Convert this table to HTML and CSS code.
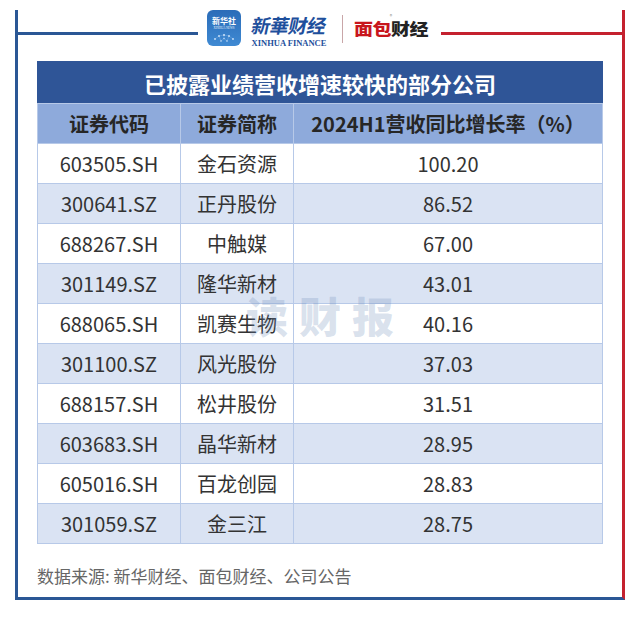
FILE: index.html
```html
<!DOCTYPE html>
<html lang="zh-CN">
<head>
<meta charset="utf-8">
<link rel="stylesheet" href="styles.css">
</head>
<body>
<div class="page">
  <div class="frame">
    <div class="topbar">
      <div class="line line-blue"></div>
      <div class="brand">
        <svg class="app-icon" width="34" height="36" viewBox="0 0 34 36">
          <defs>
            <linearGradient id="g" x1="0" y1="0" x2="0" y2="1">
              <stop offset="0" stop-color="#2b6cb8"/>
              <stop offset="1" stop-color="#3f8ad3"/>
            </linearGradient>
          </defs>
          <rect x="0" y="0" width="34" height="36" rx="6" fill="url(#g)"/>
          <text x="17" y="14" class="icon-cn">新华社</text>
          <text x="17" y="19" class="icon-en">XINHUA NEWS</text>
          <g fill="#cfe4fa">
            <circle cx="8" cy="29" r="0.9"/><circle cx="12" cy="26" r="0.9"/><circle cx="17" cy="25" r="1"/>
            <circle cx="22" cy="26" r="0.9"/><circle cx="26" cy="29" r="0.9"/><circle cx="14" cy="31" r="0.8"/>
            <circle cx="20" cy="31" r="0.8"/><circle cx="17" cy="28.5" r="0.7"/>
          </g>
          <g stroke="#cfe4fa" stroke-width="0.3" fill="none" opacity="0.7">
            <path d="M8 29 L12 26 L17 25 L22 26 L26 29 M12 26 L14 31 L17 28.5 L20 31 L22 26 M17 25 L17 28.5"/>
          </g>
        </svg>
        <div class="xinhua">
          <div class="xinhua-cn">新華财经</div>
          <div class="xinhua-en">XINHUA FINANCE</div>
        </div>
        <div class="divider"></div>
        <div class="mianbao-wrap">
          <span class="reg">®</span>
          <div class="mianbao"><span class="mb-red">面包</span><span class="mb-black">财经</span></div>
        </div>
      </div>
      <div class="line line-red"></div>
    </div>

    <div class="table-wrap">
      <table class="data">
        <colgroup>
          <col class="c1"><col class="c2"><col class="c3">
        </colgroup>
        <thead>
          <tr class="title-row"><th colspan="3">已披露业绩营收增速较快的部分公司</th></tr>
          <tr class="head-row"><th>证券代码</th><th>证券简称</th><th>2024H1营收同比增长率（%）</th></tr>
        </thead>
        <tbody>
          <tr><td>603505.SH</td><td>金石资源</td><td>100.20</td></tr>
          <tr class="alt"><td>300641.SZ</td><td>正丹股份</td><td>86.52</td></tr>
          <tr><td>688267.SH</td><td>中触媒</td><td>67.00</td></tr>
          <tr class="alt"><td>301149.SZ</td><td>隆华新材</td><td>43.01</td></tr>
          <tr><td>688065.SH</td><td>凯赛生物</td><td>40.16</td></tr>
          <tr class="alt"><td>301100.SZ</td><td>风光股份</td><td>37.03</td></tr>
          <tr><td>688157.SH</td><td>松井股份</td><td>31.51</td></tr>
          <tr class="alt"><td>603683.SH</td><td>晶华新材</td><td>28.95</td></tr>
          <tr><td>605016.SH</td><td>百龙创园</td><td>28.83</td></tr>
          <tr class="alt"><td>301059.SZ</td><td>金三江</td><td>28.75</td></tr>
        </tbody>
      </table>
      <div class="watermark">读财报</div>
    </div>

    <p class="source">数据来源: 新华财经、面包财经、公司公告</p>
  </div>
</div>
</body>
</html>
```

FILE: styles.css
```css
html, body {
  margin: 0;
  padding: 0;
  background: #ffffff;
}
body {
  font-family: "Noto Sans CJK SC", "Noto Sans", sans-serif;
  color: #333;
}
.page {
  width: 640px;
  padding: 32px 15px 0 15px;
  box-sizing: border-box;
}
.frame {
  width: 610px;
  box-sizing: border-box;
  border-left: 3px solid #2a5795;
  border-right: 3px solid #c4212f;
  border-bottom: 3px solid #2a5795;
  padding-bottom: 9px;
}
.topbar {
  display: flex;
  align-items: flex-start;
  height: 38px;
  margin-top: -22px;
}
.line {
  height: 3px;
  margin-top: 22px;
}
.line-blue {
  width: 180px;
  background: #2a5795;
}
.line-red {
  flex: 1;
  background: #c4212f;
}
.brand {
  display: flex;
  align-items: flex-start;
  margin: 0 13px 0 9px;
}
.app-icon {
  display: block;
}
.icon-cn {
  font-family: "Noto Sans CJK SC", sans-serif;
  font-size: 8px;
  font-weight: 700;
  fill: #ffffff;
  text-anchor: middle;
}
.icon-en {
  font-family: "Liberation Serif", serif;
  font-size: 3px;
  fill: #e6f0fb;
  text-anchor: middle;
}
.xinhua {
  margin-left: 8px;
  width: 80px;
  display: flex;
  flex-direction: column;
  align-items: center;
}
.xinhua-cn {
  font-family: "Noto Sans CJK SC", sans-serif;
  font-size: 19px;
  font-weight: 700;
  color: #1e4f9c;
  line-height: 24px;
  margin-top: 3px;
  letter-spacing: -0.5px;
  transform: skewX(-12deg);
}
.xinhua-en {
  font-family: "Liberation Serif", serif;
  font-size: 8.5px;
  font-weight: 700;
  color: #1e4f9c;
  line-height: 10px;
  margin-top: 1px;
}
.divider {
  width: 1px;
  height: 28px;
  margin: 5px 11px 0 13px;
  background: #c9a6a8;
}
.mianbao-wrap {
  display: flex;
  flex-direction: column;
  align-items: flex-end;
}
.reg {
  font-size: 5px;
  line-height: 6px;
  color: #888;
  margin: 3px 36px 0 0;
}
.mianbao {
  font-family: "Noto Sans CJK SC", sans-serif;
  font-size: 19px;
  font-weight: 900;
  line-height: 18px;
  letter-spacing: -0.5px;
  transform: scaleY(0.85);
}
.mb-red { color: #c8161d; }
.mb-black { color: #222; }
.table-wrap {
  position: relative;
  margin: 13px 0 0 19px;
  width: 565px;
}
.data {
  width: 565px;
  border-collapse: collapse;
  table-layout: fixed;
}
.c1 { width: 143px; }
.c2 { width: 113px; }
.c3 { width: 309px; }
.data th, .data td {
  border: 1px solid #b7c9e8;
  text-align: center;
  padding: 0;
}
.title-row th {
  height: 41px;
  background: #2f5597;
  color: #ffffff;
  font-size: 22px;
  font-weight: 700;
  border-color: #2f5597;
  border-bottom-color: #b7c9e8;
}
.head-row th {
  height: 39px;
  background: #8eaadb;
  color: #262626;
  font-size: 20px;
  font-weight: 700;
}
.data td {
  height: 39px;
  font-size: 20px;
  color: #333;
  background: #ffffff;
}
.data tr.alt td {
  background: #dae3f3;
}
.watermark {
  position: absolute;
  left: 209px;
  top: 232px;
  font-size: 42px;
  font-weight: 900;
  letter-spacing: 11px;
  color: rgba(110, 140, 185, 0.26);
  line-height: 44px;
  pointer-events: none;
}
.source {
  margin: 20px 0 0 19px;
  font-size: 17px;
  line-height: 24px;
  color: #666;
}
```
